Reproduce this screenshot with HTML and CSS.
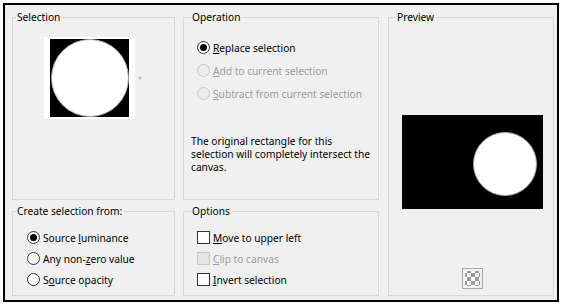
FILE: index.html
```html
<!DOCTYPE html>
<html>
<head>
<meta charset="utf-8">
<link rel="stylesheet" href="styles.css">
</head>
<body>
<div class="frame">
  <fieldset class="group sel">
    <legend class="lg-first">Selection</legend>
    <div class="thumb-row">
      <div class="thumb"><div class="thumb-bg"><div class="disc"></div></div></div>
      <span class="arrow"></span>
    </div>
  </fieldset>

  <fieldset class="group op">
    <legend>Operation</legend>
    <div class="op-list">
      <div class="opt tall"><span class="radio on"></span><span><u>R</u>eplace selection</span></div>
      <div class="opt tall dis"><span class="radio"></span><span><u>A</u>dd to current selection</span></div>
      <div class="opt tall dis"><span class="radio"></span><span><u>S</u>ubtract from current selection</span></div>
    </div>
    <p class="note">The original rectangle for this<br>selection will completely intersect the<br>canvas.</p>
  </fieldset>

  <fieldset class="group preview">
    <legend>Preview</legend>
    <div class="pv"><div class="pv-disc"></div></div>
    <div class="checker"></div>
  </fieldset>

  <fieldset class="group create">
    <legend class="lg-first">Create selection from:</legend>
    <div class="list">
      <div class="opt"><span class="radio on"></span><span>Source <u>l</u>uminance</span></div>
      <div class="opt"><span class="radio"></span><span>Any non-<u>z</u>ero value</span></div>
      <div class="opt"><span class="radio"></span><span>S<u>o</u>urce opacity</span></div>
    </div>
  </fieldset>

  <fieldset class="group options">
    <legend>Options</legend>
    <div class="list list-op">
      <div class="opt"><span class="check"></span><span><u>M</u>ove to upper left</span></div>
      <div class="opt dis"><span class="check"></span><span><u>C</u>lip to canvas</span></div>
      <div class="opt"><span class="check"></span><span><u>I</u>nvert selection</span></div>
    </div>
  </fieldset>
</div>
</body>
</html>
```

FILE: styles.css
```css
html, body {
  margin: 0;
  padding: 0;
  background: #ffffff;
}

body {
  padding: 3px 0 0 3px;
  font-family: "Noto Sans", "Liberation Sans", sans-serif;
  font-size: 10.2px;
  color: #000;
}

.frame {
  box-sizing: border-box;
  width: 556px;
  height: 299px;
  border: 2px solid #000;
  background: #f0f0f0;
  padding: 5px 2px 4px 7px;
  display: grid;
  grid-template-columns: 163px 196px 167px;
  grid-template-rows: 190px 92px;
  column-gap: 8px;
  row-gap: 4px;
}

.group {
  margin: 0;
  padding: 0;
  min-width: 0;
  border: 1px solid #d9d9d9;
  box-sizing: border-box;
}

.group legend {
  font-size: 10.2px;
  line-height: 14px;
  padding: 0 2px 0 1px;
  margin-left: 7px;
}

.group legend.lg-first {
  margin-left: 3px;
}

.sel { grid-column: 1; grid-row: 1; }
.op { grid-column: 2; grid-row: 1; }
.preview { grid-column: 3; grid-row: 1 / 3; margin-left: 1px; }
.create { grid-column: 1; grid-row: 2; }
.options { grid-column: 2; grid-row: 2; }

/* Selection thumbnail */
.thumb-row {
  display: flex;
  align-items: center;
  gap: 3px;
  margin: 13px 0 0 31px;
}

.thumb {
  background: #fff;
  padding: 2px 6px;
}

.thumb-bg {
  width: 79px;
  height: 78px;
  background: #000;
  display: flex;
  align-items: center;
  justify-content: center;
}

.disc {
  box-sizing: border-box;
  width: 78px;
  height: 78px;
  border-radius: 50%;
  background: #fff;
  border: 1px solid #a8a8a8;
}

.arrow {
  width: 0;
  height: 0;
  border-top: 3px solid #b4b4b4;
  border-left: 2.5px solid transparent;
  border-right: 2.5px solid transparent;
}

/* option rows */
.op-list {
  padding: 12px 0 0 13px;
}

.opt {
  display: flex;
  align-items: center;
  gap: 3px;
  height: 21px;
  line-height: 14px;
  white-space: nowrap;
}

.opt.tall {
  height: 23px;
}

.opt.dis {
  color: #9b9b9b;
}

.list {
  padding: 9px 0 0 14px;
}

.list-op {
  padding-left: 13px;
}

.radio {
  box-sizing: border-box;
  width: 13px;
  height: 13px;
  flex: none;
  border-radius: 50%;
  border: 1px solid #333;
  background: #fff;
  display: flex;
  align-items: center;
  justify-content: center;
}

.radio.on::after {
  content: "";
  width: 7px;
  height: 7px;
  border-radius: 50%;
  background: #000;
}

.dis .radio {
  border-color: #c6c6c6;
  background: #ececec;
}

.check {
  box-sizing: border-box;
  width: 13px;
  height: 13px;
  flex: none;
  border: 1px solid #333;
  background: #fff;
}

.dis .check {
  border-color: #c6c6c6;
  background: #e4e4e4;
}

.note {
  margin: 30px 0 0 7px;
  line-height: 13px;
}

/* Preview */
.pv {
  position: relative;
  width: 141px;
  height: 94px;
  background: #000;
  margin: 91px 0 0 13px;
}

.pv-disc {
  position: absolute;
  left: 71px;
  top: 17px;
  box-sizing: border-box;
  width: 64px;
  height: 64px;
  border-radius: 50%;
  background: #fff;
  border: 1px solid #a8a8a8;
}

.checker {
  box-sizing: border-box;
  width: 21px;
  height: 21px;
  margin: 59px 0 0 73px;
  border: 1px solid #a8a8a8;
  padding: 2px;
  background: repeating-conic-gradient(#9c9c9c 0 25%, #ffffff 0 50%) 2px 2px / 8px 8px;
  background-clip: content-box;
  background-origin: content-box;
}
```
